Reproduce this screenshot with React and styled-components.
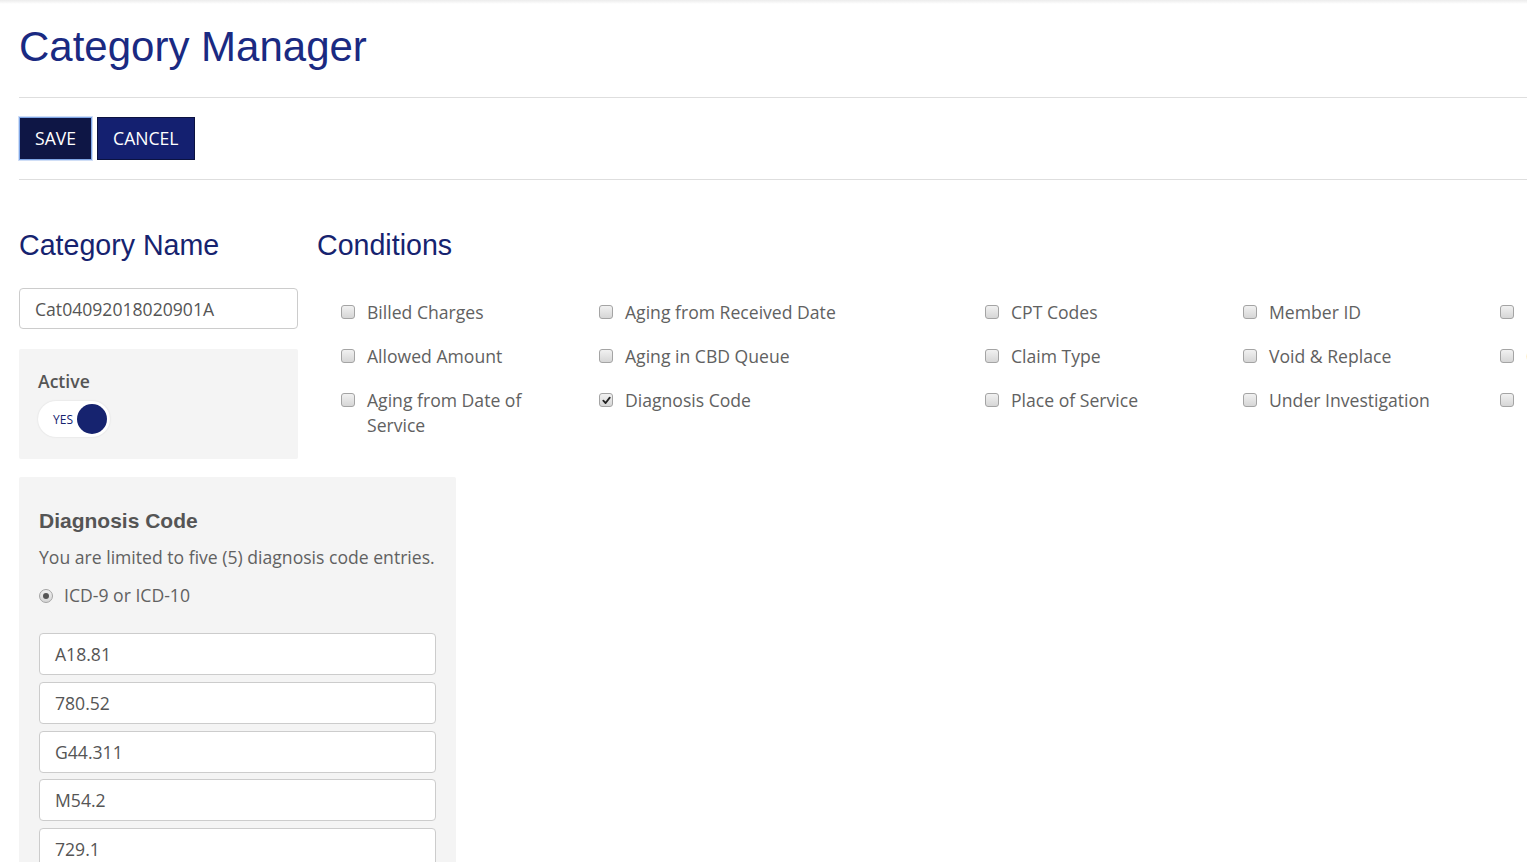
import React from 'react';
import styled, { createGlobalStyle } from 'styled-components';

const Global = createGlobalStyle`
  html, body { margin: 0; padding: 0; background: #fff; overflow: hidden; }
  body { font-family: "Open Sans", "Liberation Sans", sans-serif; color: #616161; }
  * { box-sizing: border-box; }
`;

const NAVY = '#16236f';

const TopShade = styled.div`
  height: 4px;
  background: linear-gradient(#ececec, rgba(255,255,255,0));
  margin-bottom: -4px;
`;

const Page = styled.div`
  padding: 0 0 0 19px;
  width: 1527px;
  height: 862px;
  overflow: hidden;
`;

const Title = styled.h1`
  margin: 22px 0 0;
  font-family: "Liberation Sans", Arial, sans-serif;
  font-weight: 400;
  font-size: 42px;
  line-height: 50px;
  color: #1a2a82;
`;

const Divider = styled.div`
  border-top: 1px solid #dedede;
  margin-top: ${p => p.$top}px;
`;

const Toolbar = styled.div`
  display: flex;
  gap: 5px;
  padding: 19px 0 19px;
`;

const Button = styled.button`
  height: 43px;
  padding: 0 15px;
  font-family: "Open Sans", sans-serif;
  font-size: 17.6px;
  line-height: 1;
  color: #fff;
  background: ${p => (p.$focused ? '#0e1645' : '#142070')};
  border: 1px solid ${p => (p.$focused ? '#7fa6e6' : '#0b1240')};
  box-shadow: ${p => (p.$focused ? '0 0 0 1px rgba(120,160,230,0.35)' : 'none')};
  text-transform: uppercase;
  cursor: pointer;
`;

const Main = styled.div`
  display: flex;
  gap: 19px;
  margin-top: 48px;
`;

const LeftCol = styled.div`
  width: 279px;
  flex: none;
`;

const SectionTitle = styled.h2`
  margin: 0;
  font-family: "Liberation Sans", Arial, sans-serif;
  font-weight: 400;
  font-size: 28.6px;
  line-height: 34px;
  color: ${NAVY};
`;

const TextInput = styled.div`
  height: ${p => p.$h || 41}px;
  border: 1px solid #cccccc;
  border-radius: 4px;
  background: #fff;
  display: flex;
  align-items: center;
  padding-left: 15px;
  font-size: 17.6px;
  color: #555;
`;

const NameInput = styled(TextInput)`
  margin-top: 26px;
`;

const GreyPanel = styled.div`
  background: #f4f4f4;
  border-radius: 2px;
`;

const ActivePanel = styled(GreyPanel)`
  margin-top: 20px;
  height: 110px;
  padding: 20px 19px 0;
`;

const FieldLabel = styled.div`
  font-size: 17.6px;
  font-weight: 600;
  line-height: 25px;
  color: #555;
`;

const Toggle = styled.div`
  margin-top: 7px;
  width: 72px;
  height: 36px;
  border-radius: 18px;
  background: #fff;
  box-shadow: 0 0 2px rgba(0,0,0,0.12);
  display: flex;
  align-items: center;
  padding: 0 3px 0 15px;
  justify-content: space-between;
`;

const ToggleText = styled.span`
  font-size: 12px;
  color: ${NAVY};
`;

const Knob = styled.span`
  width: 30px;
  height: 30px;
  border-radius: 50%;
  background: ${NAVY};
`;

const Conditions = styled.div`
  flex: 1;
`;

const CondGrid = styled.div`
  margin-top: 38px;
  padding-left: 24px;
  display: grid;
  grid-template-columns: 258px 386px 258px 257px 258px;
  row-gap: 19px;
`;

const CondItem = styled.div`
  display: flex;
  align-items: flex-start;
  gap: 12px;
  padding-right: 45px;
`;

const Box = styled.span`
  flex: none;
  width: 14px;
  height: 14px;
  margin-top: 5px;
  border: 1px solid #a4a4a4;
  border-radius: 3px;
  background: linear-gradient(#f1f1f1, #d6d6d6);
  display: flex;
  align-items: center;
  justify-content: center;
`;

const CondLabel = styled.span`
  font-size: 17.6px;
  line-height: 25px;
  color: #616161;
  white-space: ${p => (p.$nowrap ? 'nowrap' : 'normal')};
`;

const DiagPanel = styled(GreyPanel)`
  margin-top: 18px;
  width: 437px;
  padding: 31px 20px 20px;
  height: 420px;
`;

const DiagTitle = styled.h3`
  margin: 0;
  font-family: "Liberation Sans", Arial, sans-serif;
  font-weight: 700;
  font-size: 21px;
  line-height: 25px;
  color: #555;
`;

const Note = styled.p`
  margin: 12px 0 0;
  font-size: 17.6px;
  line-height: 25px;
  color: #616161;
`;

const RadioRow = styled.div`
  margin-top: 13px;
  display: flex;
  align-items: center;
  gap: 11px;
  font-size: 17.6px;
  line-height: 25px;
`;

const Radio = styled.span`
  width: 14px;
  height: 14px;
  border-radius: 50%;
  border: 1px solid #a4a4a4;
  background: linear-gradient(#f1f1f1, #d6d6d6);
  display: flex;
  align-items: center;
  justify-content: center;
  &::after {
    content: '';
    width: 6px;
    height: 6px;
    border-radius: 50%;
    background: #555;
  }
`;

const CodeList = styled.div`
  margin-top: 25px;
  display: flex;
  flex-direction: column;
  gap: 6.75px;
`;

const Check = () => (
  <svg width="9" height="9" viewBox="0 0 10 10">
    <path d="M1.5 5.2 L4 7.8 L8.6 1.8" fill="none" stroke="#222" strokeWidth="2" strokeLinecap="round" strokeLinejoin="round" />
  </svg>
);

const conditions = [
  ['Billed Charges', false], ['Aging from Received Date', false], ['CPT Codes', false], ['Member ID', false], ['Provider NPI', false],
  ['Allowed Amount', false], ['Aging in CBD Queue', false], ['Claim Type', false], ['Void & Replace', false], ['Group Number', false],
  ['Aging from Date of Service', false], ['Diagnosis Code', true], ['Place of Service', false], ['Under Investigation', false], ['Line of Business', false],
];

const codes = ['A18.81', '780.52', 'G44.311', 'M54.2', '729.1'];

export default function App() {
  return (
    <>
      <Global />
      <TopShade />
      <Page>
        <Title>Category Manager</Title>
        <Divider $top={25} />
        <Toolbar>
          <Button $focused>Save</Button>
          <Button>Cancel</Button>
        </Toolbar>
        <Divider $top={0} />
        <Main>
          <LeftCol>
            <SectionTitle>Category Name</SectionTitle>
            <NameInput>Cat04092018020901A</NameInput>
            <ActivePanel>
              <FieldLabel>Active</FieldLabel>
              <Toggle>
                <ToggleText>YES</ToggleText>
                <Knob />
              </Toggle>
            </ActivePanel>
          </LeftCol>
          <Conditions>
            <SectionTitle>Conditions</SectionTitle>
            <CondGrid>
              {conditions.map(([label, checked], i) => (
                <CondItem key={i}>
                  <Box>{checked && <Check />}</Box>
                  <CondLabel $nowrap={i % 5 === 4}>{label}</CondLabel>
                </CondItem>
              ))}
            </CondGrid>
          </Conditions>
        </Main>
        <DiagPanel>
          <DiagTitle>Diagnosis Code</DiagTitle>
          <Note>You are limited to five (5) diagnosis code entries.</Note>
          <RadioRow>
            <Radio />
            <span>ICD-9 or ICD-10</span>
          </RadioRow>
          <CodeList>
            {codes.map(c => (
              <TextInput key={c} $h={42}>{c}</TextInput>
            ))}
          </CodeList>
        </DiagPanel>
      </Page>
    </>
  );
}
